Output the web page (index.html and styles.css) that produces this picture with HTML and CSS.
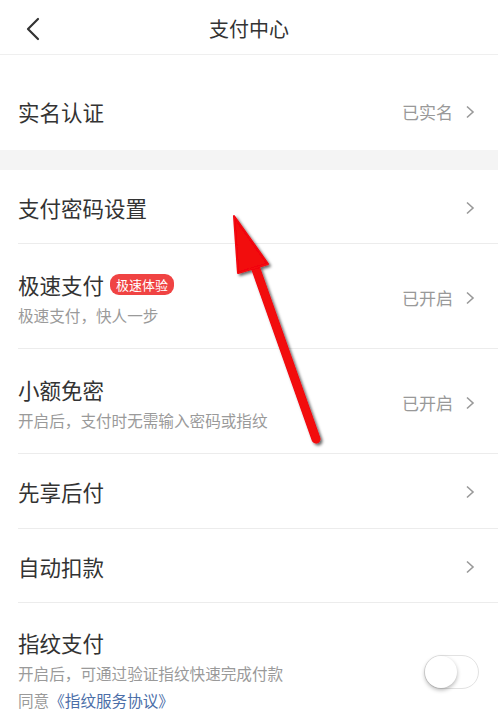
FILE: index.html
```html
<!DOCTYPE html>
<html lang="zh">
<head>
<meta charset="utf-8">
<link rel="stylesheet" href="styles.css">
</head>
<body>
<div class="page">
  <header class="nav">
    <svg class="back" width="16" height="24" viewBox="0 0 16 24"><polyline points="13,2 3,12 13,22" fill="none" stroke="#333" stroke-width="2.2" stroke-linecap="round" stroke-linejoin="round"/></svg>
    <div class="nav-title">支付中心</div>
  </header>

  <div class="row row-first">
    <div class="main"><div class="title">实名认证</div></div>
    <div class="side"><span class="status">已实名</span><svg class="chev" width="10" height="14" viewBox="0 0 10 14"><polyline points="2,1.5 8,7 2,12.5" fill="none" stroke="#999" stroke-width="1.6"/></svg></div>
  </div>

  <div class="gap"></div>

  <div class="row row-single">
    <div class="main"><div class="title">支付密码设置</div></div>
    <div class="side"><svg class="chev" width="10" height="14" viewBox="0 0 10 14"><polyline points="2,1.5 8,7 2,12.5" fill="none" stroke="#999" stroke-width="1.6"/></svg></div>
  </div>

  <div class="row row-double">
    <div class="main">
      <div class="title">极速支付<span class="badge">极速体验</span></div>
      <div class="sub">极速支付，快人一步</div>
    </div>
    <div class="side"><span class="status">已开启</span><svg class="chev" width="10" height="14" viewBox="0 0 10 14"><polyline points="2,1.5 8,7 2,12.5" fill="none" stroke="#999" stroke-width="1.6"/></svg></div>
  </div>

  <div class="row row-double">
    <div class="main">
      <div class="title">小额免密</div>
      <div class="sub">开启后，支付时无需输入密码或指纹</div>
    </div>
    <div class="side"><span class="status">已开启</span><svg class="chev" width="10" height="14" viewBox="0 0 10 14"><polyline points="2,1.5 8,7 2,12.5" fill="none" stroke="#999" stroke-width="1.6"/></svg></div>
  </div>

  <div class="row row-single tall">
    <div class="main"><div class="title">先享后付</div></div>
    <div class="side"><svg class="chev" width="10" height="14" viewBox="0 0 10 14"><polyline points="2,1.5 8,7 2,12.5" fill="none" stroke="#999" stroke-width="1.6"/></svg></div>
  </div>

  <div class="row row-single">
    <div class="main"><div class="title">自动扣款</div></div>
    <div class="side"><svg class="chev" width="10" height="14" viewBox="0 0 10 14"><polyline points="2,1.5 8,7 2,12.5" fill="none" stroke="#999" stroke-width="1.6"/></svg></div>
  </div>

  <div class="row row-last">
    <div class="main">
      <div class="title">指纹支付</div>
      <div class="sub">开启后，可通过验证指纹快速完成付款</div>
      <div class="sub agree">同意<span class="link">《指纹服务协议》</span></div>
    </div>
    <div class="side"><div class="toggle"><div class="knob"></div></div></div>
  </div>

  <svg class="arrow" width="498" height="724" viewBox="0 0 498 724">
    <defs>
      <filter id="sh" x="-50%" y="-50%" width="200%" height="200%">
        <feDropShadow dx="2" dy="2" stdDeviation="1.5" flood-color="#000" flood-opacity="0.6"/>
      </filter>
    </defs>
    <g filter="url(#sh)" fill="#f2070e" stroke="#f2070e">
      <line x1="252" y1="258" x2="316" y2="439" stroke-width="9" stroke-linecap="round"/>
      <polygon points="234,216 238,273 268,264" stroke-width="2" stroke-linejoin="round"/>
    </g>
  </svg>
</div>
</body>
</html>
```

FILE: styles.css
```css
* { box-sizing: border-box; }
html, body { margin: 0; padding: 0; background: #fff; }
body {
  font-family: "Noto Sans CJK SC", "Noto Sans", sans-serif;
  color: #333;
  width: 498px;
  height: 724px;
  overflow: hidden;
}
.page { position: relative; width: 498px; height: 724px; }

.nav {
  height: 55px;
  display: flex;
  align-items: center;
  justify-content: center;
  position: relative;
  border-bottom: 1px solid #efefef;
}
.back { position: absolute; left: 25px; top: 17px; }
.nav-title { font-size: 20px; color: #333; line-height: 26px; padding-top: 4px; }

.row {
  display: flex;
  align-items: center;
  justify-content: space-between;
  margin-left: 18px;
  padding-right: 23px;
  border-bottom: 1px solid #ececec;
}
.row-first { height: 95px; border-bottom: none; padding-top: 18px; }
.gap { height: 20px; background: #f4f4f4; }
.row-single { height: 74px; padding-top: 2px; }
.row-single.tall { height: 75px; }
.row-double { height: 105px; padding-top: 3px; }
.row-last { border-bottom: none; height: 121px; align-items: flex-start; padding-top: 25px; }

.main { display: flex; flex-direction: column; }
.title {
  font-size: 21.5px;
  line-height: 30px;
  color: #333;
  display: flex;
  align-items: center;
}
.sub { font-size: 15.6px; line-height: 22px; color: #9a9a9a; margin-top: 4px; }
.agree { margin-top: 5px; }
.link { color: #4b6ea8; }

.badge {
  display: inline-block;
  margin-left: 6px;
  background: #f04343;
  color: #fff;
  font-size: 13px;
  line-height: 21px;
  height: 21px;
  padding: 0 6px;
  border-radius: 9px;
}

.side { display: flex; align-items: center; }
.status { font-size: 17px; color: #999; margin-right: 12px; }
.chev { display: block; }

.toggle {
  margin-top: 27px;
  margin-right: -4px;
  width: 55px;
  height: 34px;
  border-radius: 17px;
  border: 1px solid #e2e2e2;
  background: #fff;
  position: relative;
}
.knob {
  position: absolute;
  left: 0;
  top: 0;
  width: 32px;
  height: 32px;
  border-radius: 50%;
  background: #fff;
  box-shadow: 0 2px 4px rgba(0,0,0,0.3);
}

.arrow { position: absolute; left: 0; top: 0; pointer-events: none; }
```
